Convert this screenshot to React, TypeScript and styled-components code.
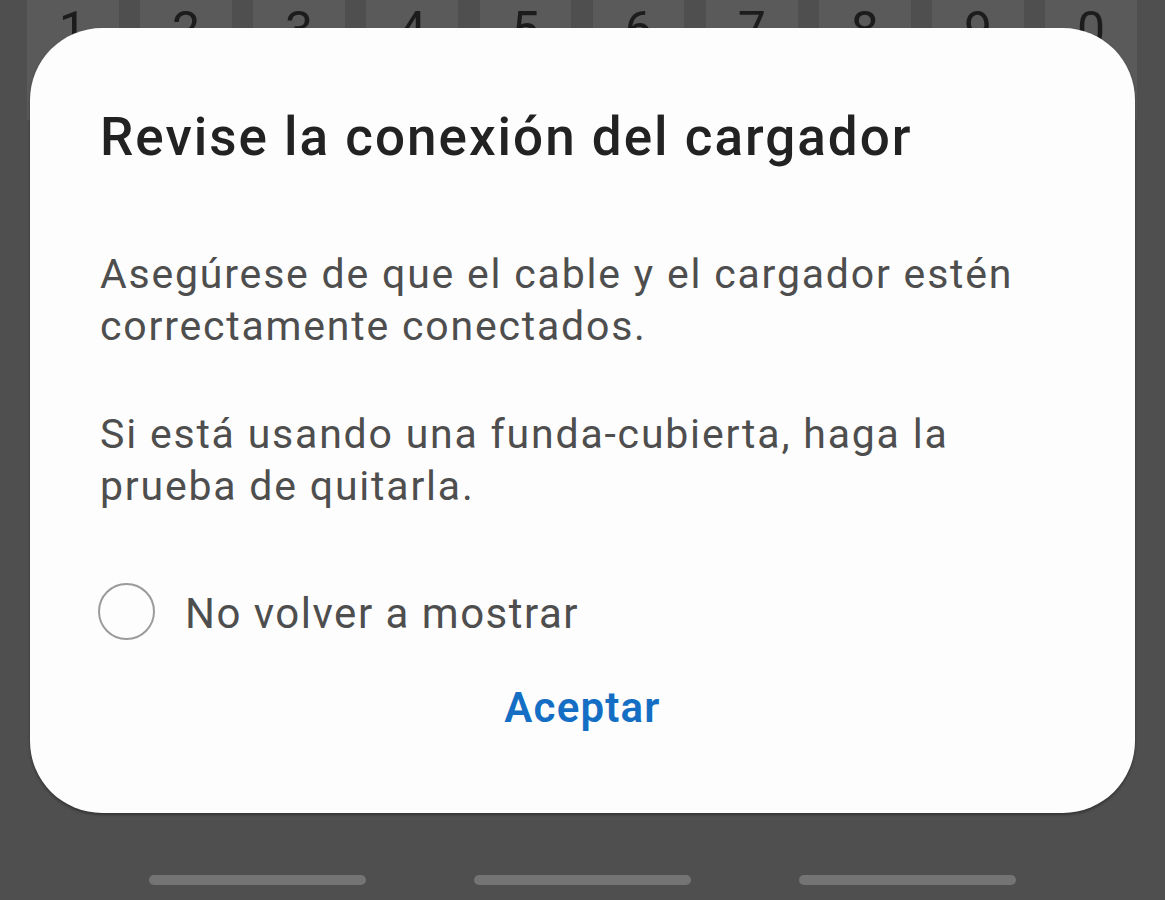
import React, { useState } from 'react';
import styled, { createGlobalStyle } from 'styled-components';

const GlobalStyle = createGlobalStyle`
  html, body {
    margin: 0;
    padding: 0;
    background: #4f4f4f;
  }
  * {
    box-sizing: border-box;
  }
`;

const keys = ['1', '2', '3', '4', '5', '6', '7', '8', '9', '0'];

const Page = styled.div`
  position: relative;
  width: 1165px;
  height: 900px;
  overflow: hidden;
  background: #4f4f4f;
  display: flex;
  flex-direction: column;
  justify-content: space-between;
  font-family: Roboto, 'Noto Sans', sans-serif;
`;

const KeyRow = styled.div`
  display: flex;
  gap: 21.4px;
  padding: 0 28px 0 27px;
  height: 120px;
`;

const Key = styled.div`
  flex: 1;
  background: #5a5a5a;
  display: flex;
  justify-content: center;
  color: #1c1c1c;
  font-size: 50px;
  line-height: 1;
  padding-top: 5px;
`;

const NavBar = styled.div`
  display: flex;
  justify-content: center;
  gap: 108px;
  padding-bottom: 15px;
`;

const NavPill = styled.div`
  width: 217px;
  height: 10px;
  border-radius: 5px;
  background: #747474;
`;

const Dialog = styled.div`
  position: absolute;
  top: 28px;
  left: 30px;
  width: 1105px;
  height: 785px;
  background: #fdfdfd;
  border-radius: 72px;
  box-shadow: 0 2px 3px rgba(0, 0, 0, 0.35);
  padding: 78px 70px 0 70px;
  display: flex;
  flex-direction: column;
`;

const Title = styled.h1`
  margin: 0;
  font-size: 53px;
  line-height: 62px;
  font-weight: 500;
  letter-spacing: 2px;
  color: #222222;
`;

const Paragraph = styled.p<{ $top: number }>`
  margin: ${(p) => p.$top}px 0 0 0;
  font-size: 41px;
  line-height: 52px;
  font-weight: 400;
  letter-spacing: 1.8px;
  color: #4e4e4e;
`;

const CheckRow = styled.label`
  display: flex;
  align-items: center;
  gap: 30px;
  margin-top: 68px;
  cursor: pointer;
`;

const Circle = styled.span<{ $checked: boolean }>`
  width: 57px;
  height: 57px;
  flex: none;
  margin-left: -2px;
  border-radius: 50%;
  border: 2px solid #9b9b9b;
  background: ${(p) => (p.$checked ? '#1a6fc2' : 'transparent')};
`;

const CheckLabel = styled.span`
  font-size: 42px;
  line-height: 56px;
  letter-spacing: 1.5px;
  color: #4e4e4e;
  padding-top: 6px;
`;

const Actions = styled.div`
  display: flex;
  justify-content: center;
  margin-top: 40px;
`;

const AcceptButton = styled.button`
  border: none;
  background: none;
  padding: 0;
  font-family: inherit;
  font-size: 42px;
  line-height: 52px;
  font-weight: 600;
  letter-spacing: 1.2px;
  color: #146fc4;
  cursor: pointer;
`;

export default function App() {
  const [checked, setChecked] = useState(false);
  return (
    <>
      <GlobalStyle />
      <Page>
        <KeyRow>
          {keys.map((k) => (
            <Key key={k}>{k}</Key>
          ))}
        </KeyRow>
        <NavBar>
          <NavPill />
          <NavPill />
          <NavPill />
        </NavBar>
        <Dialog>
          <Title>Revise la conexión del cargador</Title>
          <Paragraph $top={80}>
            Asegúrese de que el cable y el cargador estén correctamente conectados.
          </Paragraph>
          <Paragraph $top={56}>
            Si está usando una funda-cubierta, haga la prueba de quitarla.
          </Paragraph>
          <CheckRow onClick={() => setChecked((c) => !c)}>
            <Circle $checked={checked} />
            <CheckLabel>No volver a mostrar</CheckLabel>
          </CheckRow>
          <Actions>
            <AcceptButton>Aceptar</AcceptButton>
          </Actions>
        </Dialog>
      </Page>
    </>
  );
}
